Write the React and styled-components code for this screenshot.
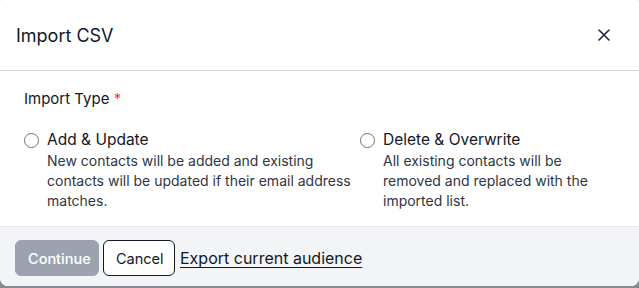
import React from "react";
import styled, { createGlobalStyle } from "styled-components";

const Global = createGlobalStyle`
  html, body { margin: 0; padding: 0; }
  body {
    background: #878a93;
    font-family: Inter, "Noto Sans", sans-serif;
    color: #111827;
    overflow: hidden;
  }
`;

const Modal = styled.div`
  width: 639px;
  margin-top: -6px;
  background: #fff;
  border-radius: 8px;
  overflow: hidden;
`;

const Header = styled.div`
  height: 77px;
  padding: 6px 24px 0 16px;
  box-sizing: border-box;
  display: flex;
  align-items: center;
  justify-content: space-between;
  border-bottom: 1px solid #d1d5db;
`;

const Title = styled.h2`
  margin: 0;
  font-size: 18px;
  font-weight: 400;
  color: #111827;
`;

const CloseBtn = styled.button`
  border: none;
  background: none;
  padding: 0;
  width: 24px;
  height: 24px;
  display: flex;
  align-items: center;
  justify-content: center;
  margin-right: -1px;
  cursor: pointer;
`;

const Body = styled.div`
  padding: 18px 24px 15px 24px;
`;

const Label = styled.div`
  font-size: 15px;
  line-height: 20px;
  color: #111827;
`;

const Req = styled.span`
  color: #ef4444;
`;

const Options = styled.div`
  display: grid;
  grid-template-columns: 336px 1fr;
  margin-top: 21px;
`;

const Option = styled.label`
  display: grid;
  grid-template-columns: 23px 1fr;
  cursor: pointer;
`;

const Radio = styled.span`
  width: 13px;
  height: 13px;
  border: 1px solid #6b7280;
  border-radius: 50%;
  margin-top: 3px;
  box-sizing: content-box;
`;

const OptTitle = styled.div`
  font-size: 15.5px;
  line-height: 20px;
  color: #111827;
`;

const OptDesc = styled.div`
  margin-top: 1px;
  font-size: 14px;
  line-height: 20px;
  color: #2f3642;
  padding-right: 8px;
`;

const Footer = styled.div`
  border-top: 1px solid #e5e7eb;
  background: #f3f4f6;
  padding: 13px 15px 10px;
  display: flex;
  align-items: center;
  gap: 4px;
`;

const Button = styled.button`
  height: 36px;
  padding: 0 12px;
  border-radius: 6px;
  font-family: inherit;
  font-size: 14.5px;
  box-sizing: border-box;
  border: 1px solid ${(p) => (p.$primary ? "#9ca3af" : "#111827")};
  background: ${(p) => (p.$primary ? "#9ca3af" : "#fff")};
  color: ${(p) => (p.$primary ? "#fff" : "#111827")};
  font-weight: ${(p) => (p.$primary ? 500 : 400)};
  width: ${(p) => p.$w}px;
`;

const Link = styled.a`
  margin-left: 1px;
  font-size: 16px;
  color: #111827;
  text-decoration: underline;
  text-underline-offset: 3px;
`;

export default function App() {
  return (
    <>
      <Global />
      <Modal>
        <Header>
          <Title>Import CSV</Title>
          <CloseBtn aria-label="Close">
            <svg width="12" height="12" viewBox="0 0 12 12">
              <path d="M1 1L11 11M11 1L1 11" stroke="#1f2937" strokeWidth="1.6" strokeLinecap="round" />
            </svg>
          </CloseBtn>
        </Header>
        <Body>
          <Label>
            Import Type <Req>*</Req>
          </Label>
          <Options>
            <Option>
              <Radio />
              <div>
                <OptTitle>Add &amp; Update</OptTitle>
                <OptDesc>
                  New contacts will be added and existing contacts will be updated if their email address matches.
                </OptDesc>
              </div>
            </Option>
            <Option>
              <Radio />
              <div>
                <OptTitle>Delete &amp; Overwrite</OptTitle>
                <OptDesc>All existing contacts will be removed and replaced with the imported list.</OptDesc>
              </div>
            </Option>
          </Options>
        </Body>
        <Footer>
          <Button $primary $w={84}>Continue</Button>
          <Button $w={72}>Cancel</Button>
          <Link href="#">Export current audience</Link>
        </Footer>
      </Modal>
    </>
  );
}
